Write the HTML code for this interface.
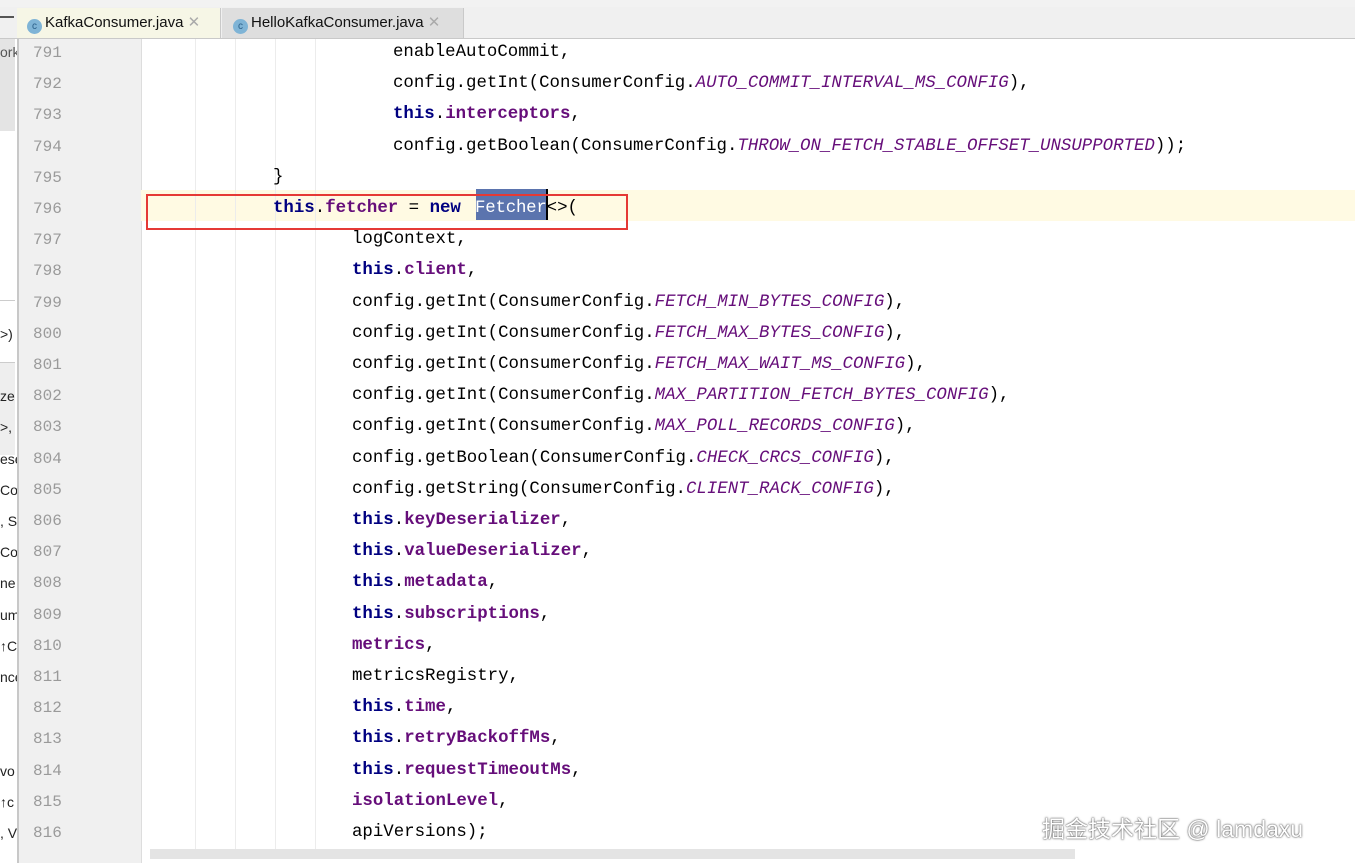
<!DOCTYPE html>
<html><head><meta charset="utf-8"><style>
body{margin:0;width:1355px;height:863px;overflow:hidden;background:#fff;position:relative;font-family:"Liberation Mono",monospace}
.abs{position:absolute}
.top{left:0;top:0;width:1355px;height:7px;background:#f2f2f2;border-bottom:1px solid #d8d8d8}
.tabbar{left:0;top:7px;width:1355px;height:31px;background:#f0f0f0;border-bottom:1px solid #c9c9c9}
.tab{top:8px;height:30px;font:15px "Liberation Sans",sans-serif;line-height:30px;color:#111}
.ic{display:inline-block;width:15px;height:15px;border-radius:50%;background:#7fb4d6;color:#2a5f88;font-size:10px;line-height:15px;text-align:center;vertical-align:-2px;margin-right:3px}
.left{left:0;top:39px;width:17px;height:824px;background:#fff;border-right:2px solid #c8c8c8}
.gut{left:19px;top:39px;width:122px;height:824px;background:#f0f0f0;border-right:1px solid #ddd}
.ln{left:33px;color:#9a9a9a;font-size:16px}
.cl{font-size:17.4px;color:#000;white-space:pre}
.k{color:#000080;font-weight:bold}
.f{color:#660e7a;font-weight:bold}
.c{color:#660e7a;font-style:italic}
.g{top:39px;width:1px;height:810px;background:#ececec}
.lf{left:0;font:14px "Liberation Sans",sans-serif;color:#222;white-space:pre;overflow:hidden;width:17px}
</style></head><body>
<div class="abs top"></div>
<div class="abs tabbar"></div>
<div class="abs tab" style="left:17px;width:204px;background:#f6f6e6;border-right:1px solid #c9c9c9;padding-left:10px;box-sizing:border-box"><span class="ic">c</span>KafkaConsumer.java <span style="color:#aaa">✕</span></div>
<div class="abs tab" style="left:222px;width:242px;background:#dedede;border-right:1px solid #c9c9c9;padding-left:11px;box-sizing:border-box"><span class="ic">c</span>HelloKafkaConsumer.java <span style="color:#aaa">✕</span></div>
<div class="abs" style="left:0;top:16px;width:14px;height:2px;background:#555"></div>
<div class="abs left"></div>
<div class="abs" style="left:0;top:39px;width:15px;height:92px;background:#e4e4e4"></div>
<div class="abs" style="left:0;top:300px;width:15px;height:1px;background:#ccc"></div>
<div class="abs" style="left:0;top:362px;width:15px;height:1px;background:#ccc"></div>
<div class="abs" style="left:0;top:363px;width:15px;height:92px;background:#eee"></div>
<div class="abs gut"></div>
<div class="abs" style="left:141px;top:190px;width:1214px;height:31px;background:#fffae3"></div>
<div class="abs g" style="left:195px"></div><div class="abs g" style="left:235px"></div><div class="abs g" style="left:275px"></div><div class="abs g" style="left:315px"></div>
<div class="abs" style="left:476px;top:189px;width:70px;height:31px;background:#5b74ae"></div>
<div id="L"></div>
<div class="abs" style="left:546px;top:189px;width:2px;height:31px;background:#000"></div>
<div class="abs" style="left:146px;top:194px;width:482px;height:36px;border:2px solid #e53935;box-sizing:border-box"></div>
<div class="abs" style="left:150px;top:849px;width:925px;height:10px;background:#e4e4e4"></div>
<div class="abs" style="left:1042px;top:810px;font:23px 'Liberation Sans','Noto Sans CJK SC',sans-serif;color:#fff;text-shadow:0 0 2px #555,0 0 1px #444">掘金技术社区 @ lamdaxu</div>
<script>
var rows=[
[393,'enableAutoCommit,'],
[393,'config.getInt(ConsumerConfig.<span class=c>AUTO_COMMIT_INTERVAL_MS_CONFIG</span>),'],
[393,'<span class=k>this</span>.<span class=f>interceptors</span>,'],
[393,'config.getBoolean(ConsumerConfig.<span class=c>THROW_ON_FETCH_STABLE_OFFSET_UNSUPPORTED</span>));'],
[273,'}'],
[273,'<span class=k>this</span>.<span class=f>fetcher</span> = <span class=k>new</span>'],
[352,'logContext,'],
[352,'<span class=k>this</span>.<span class=f>client</span>,'],
[352,'config.getInt(ConsumerConfig.<span class=c>FETCH_MIN_BYTES_CONFIG</span>),'],
[352,'config.getInt(ConsumerConfig.<span class=c>FETCH_MAX_BYTES_CONFIG</span>),'],
[352,'config.getInt(ConsumerConfig.<span class=c>FETCH_MAX_WAIT_MS_CONFIG</span>),'],
[352,'config.getInt(ConsumerConfig.<span class=c>MAX_PARTITION_FETCH_BYTES_CONFIG</span>),'],
[352,'config.getInt(ConsumerConfig.<span class=c>MAX_POLL_RECORDS_CONFIG</span>),'],
[352,'config.getBoolean(ConsumerConfig.<span class=c>CHECK_CRCS_CONFIG</span>),'],
[352,'config.getString(ConsumerConfig.<span class=c>CLIENT_RACK_CONFIG</span>),'],
[352,'<span class=k>this</span>.<span class=f>keyDeserializer</span>,'],
[352,'<span class=k>this</span>.<span class=f>valueDeserializer</span>,'],
[352,'<span class=k>this</span>.<span class=f>metadata</span>,'],
[352,'<span class=k>this</span>.<span class=f>subscriptions</span>,'],
[352,'<span class=f>metrics</span>,'],
[352,'metricsRegistry,'],
[352,'<span class=k>this</span>.<span class=f>time</span>,'],
[352,'<span class=k>this</span>.<span class=f>retryBackoffMs</span>,'],
[352,'<span class=k>this</span>.<span class=f>requestTimeoutMs</span>,'],
[352,'<span class=f>isolationLevel</span>,'],
[352,'apiVersions);']];
var lefts={9:'>)',11:'ze',12:'>,',13:'ese',14:'Co',15:', S',16:'Co',17:'ne',18:'um',19:'↑C',20:'nce',23:'vo',24:'↑c',25:', V'};
var h='';
rows.forEach(function(r,i){var y=43+i*31.2;
h+='<div class="abs ln" style="top:'+(y+1)+'px">'+(791+i)+'</div>';
h+='<div class="abs cl" style="left:'+r[0]+'px;top:'+y+'px">'+r[1]+'</div>';
if(i==5)h+='<div class="abs cl" style="left:475px;top:'+y+'px"><span style="color:#fff;letter-spacing:-0.2px">Fetcher</span>&lt;&gt;(</div>';
if(lefts[i])h+='<div class="abs lf" style="top:'+(y+2)+'px">'+lefts[i]+'</div>';});
h+='<div class="abs lf" style="top:44px;color:#555">ork</div>';
document.getElementById('L').innerHTML=h;
</script>
</body></html>
